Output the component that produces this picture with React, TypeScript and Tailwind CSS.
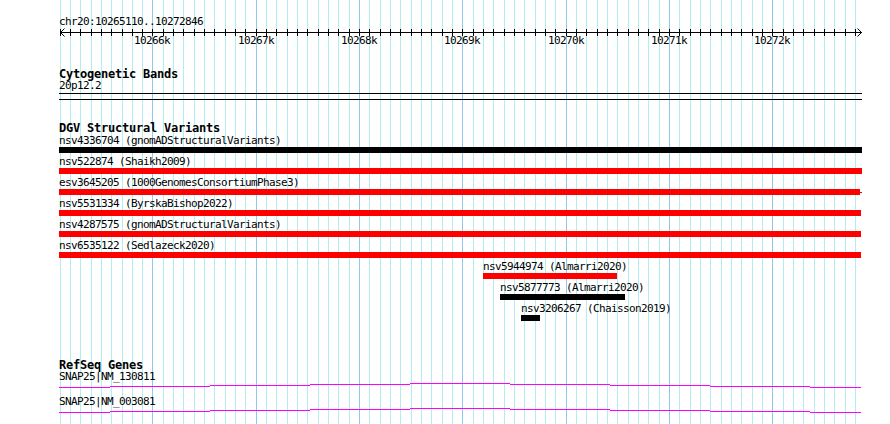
import React from "react";

// bp -> pixel, same rounding as the browser image
const px = (bp: number) => Math.ceil(152 + (bp - 10266000) * 0.1033333);

const gridBp: number[] = [];
for (let bp = 10265100; bp <= 10272800; bp += 100) gridBp.push(bp);
const majors = gridBp.filter((bp) => bp % 1000 === 0);

interface Feature {
  label: string;
  x: number;
  w: number;
  color: "red" | "black";
  tail?: boolean;
}

const features: Feature[] = [
  { label: "nsv4336704 (gnomADStructuralVariants)", x: 59, w: 803, color: "black" },
  { label: "nsv522874 (Shaikh2009)", x: 59, w: 803, color: "red" },
  { label: "esv3645205 (1000GenomesConsortiumPhase3)", x: 59, w: 801, color: "red", tail: true },
  { label: "nsv5531334 (ByrskaBishop2022)", x: 59, w: 802, color: "red" },
  { label: "nsv4287575 (gnomADStructuralVariants)", x: 59, w: 802, color: "red" },
  { label: "nsv6535122 (Sedlazeck2020)", x: 59, w: 802, color: "red" },
  { label: "nsv5944974 (Almarri2020)", x: 483, w: 134, color: "red" },
  { label: "nsv5877773 (Almarri2020)", x: 500, w: 125, color: "black" },
  { label: "nsv3206267 (Chaisson2019)", x: 521, w: 19, color: "black" },
];

// intron "hat" segments: [start, end, y offset]
const hat: [number, number, number][] = [
  [59, 110, 4],
  [110, 210, 3],
  [210, 310, 2],
  [310, 410, 1],
  [410, 510, 0],
  [510, 610, 1],
  [610, 710, 2],
  [710, 810, 3],
  [810, 861, 4],
];

function Title({ children, className = "" }: { children: React.ReactNode; className?: string }) {
  return (
    <div className={`pl-[59px] h-[10px] text-[12px] tracking-[-0.22px] leading-[10px] font-bold whitespace-nowrap ${className}`}>
      {children}
    </div>
  );
}

function Gene({ name }: { name: string }) {
  return (
    <div className="flex flex-col">
      <div className="pl-[59px] h-[13px] whitespace-nowrap">{name}</div>
      <svg width={890} height={12} className="block">
        {hat.map(([a, b, y]) => (
          <rect key={a} x={a} y={y} width={b - a} height={1} fill="#ff00ff" />
        ))}
      </svg>
    </div>
  );
}

export default function App() {
  return (
    <div className="relative w-[890px] h-[424px] overflow-hidden bg-white text-black text-[11px] tracking-[-0.62px] leading-[13px] font-['DejaVu_Sans_Mono','Liberation_Mono',monospace]">
      {/* grid */}
      <div className="absolute inset-0">
        {gridBp.map((bp) => (
          <div
            key={bp}
            className={`absolute top-0 bottom-0 w-px ${bp % 1000 === 0 ? "bg-[#8ccaf0]" : "bg-[#b0eef0]"}`}
            style={{ left: px(bp) }}
          />
        ))}
      </div>

      <div className="relative flex flex-col pt-[15px]">
        <div className="pl-[59px] h-[13px] whitespace-nowrap">chr20:10265110..10272846</div>

        {/* ruler */}
        <div className="relative h-[41px]">
          <svg width={890} height={9} className="absolute left-0 top-0">
            <rect x={60} y={4} width={802} height={1} fill="#000" />
            {gridBp.map((bp) => (
              <rect key={bp} x={px(bp)} y={1} width={1} height={7} fill="#000" />
            ))}
            <path d="M64.5 0.5 L60.5 4.5 L64.5 8.5" fill="none" stroke="#000" strokeWidth={1} />
            <path d="M857.5 0.5 L861.5 4.5 L857.5 8.5" fill="none" stroke="#000" strokeWidth={1} />
          </svg>
          {majors.map((bp) => (
            <div
              key={bp}
              className="absolute top-[6px] w-[38px] text-center whitespace-nowrap"
              style={{ left: px(bp) - 19 }}
            >
              {bp / 1000}k
            </div>
          ))}
        </div>

        <Title>Cytogenetic Bands</Title>
        <div className="pl-[59px] h-[13px]">20p12.2</div>
        <div className="ml-[59px] mt-px w-[803px] h-[7px] border-y border-black" />

        <Title className="mt-[23px]">DGV Structural Variants</Title>
        <div className="mt-px flex flex-col">
          {features.map((f) => (
            <div key={f.label} className="flex flex-col h-[21px]" style={{ marginLeft: f.x }}>
              <div className="h-[13px] whitespace-nowrap">{f.label}</div>
              <div className="flex items-center h-[6px]">
                <div className={`h-[6px] ${f.color === "red" ? "bg-[#ff0000]" : "bg-black"}`} style={{ width: f.w }} />
                {f.tail && <div className="w-[2px] h-px bg-[#ff0000]" />}
              </div>
            </div>
          ))}
        </div>

        <Title className="mt-[37px]">RefSeq Genes</Title>
        <Gene name="SNAP25|NM_130811" />
        <Gene name="SNAP25|NM_003081" />
      </div>
    </div>
  );
}
